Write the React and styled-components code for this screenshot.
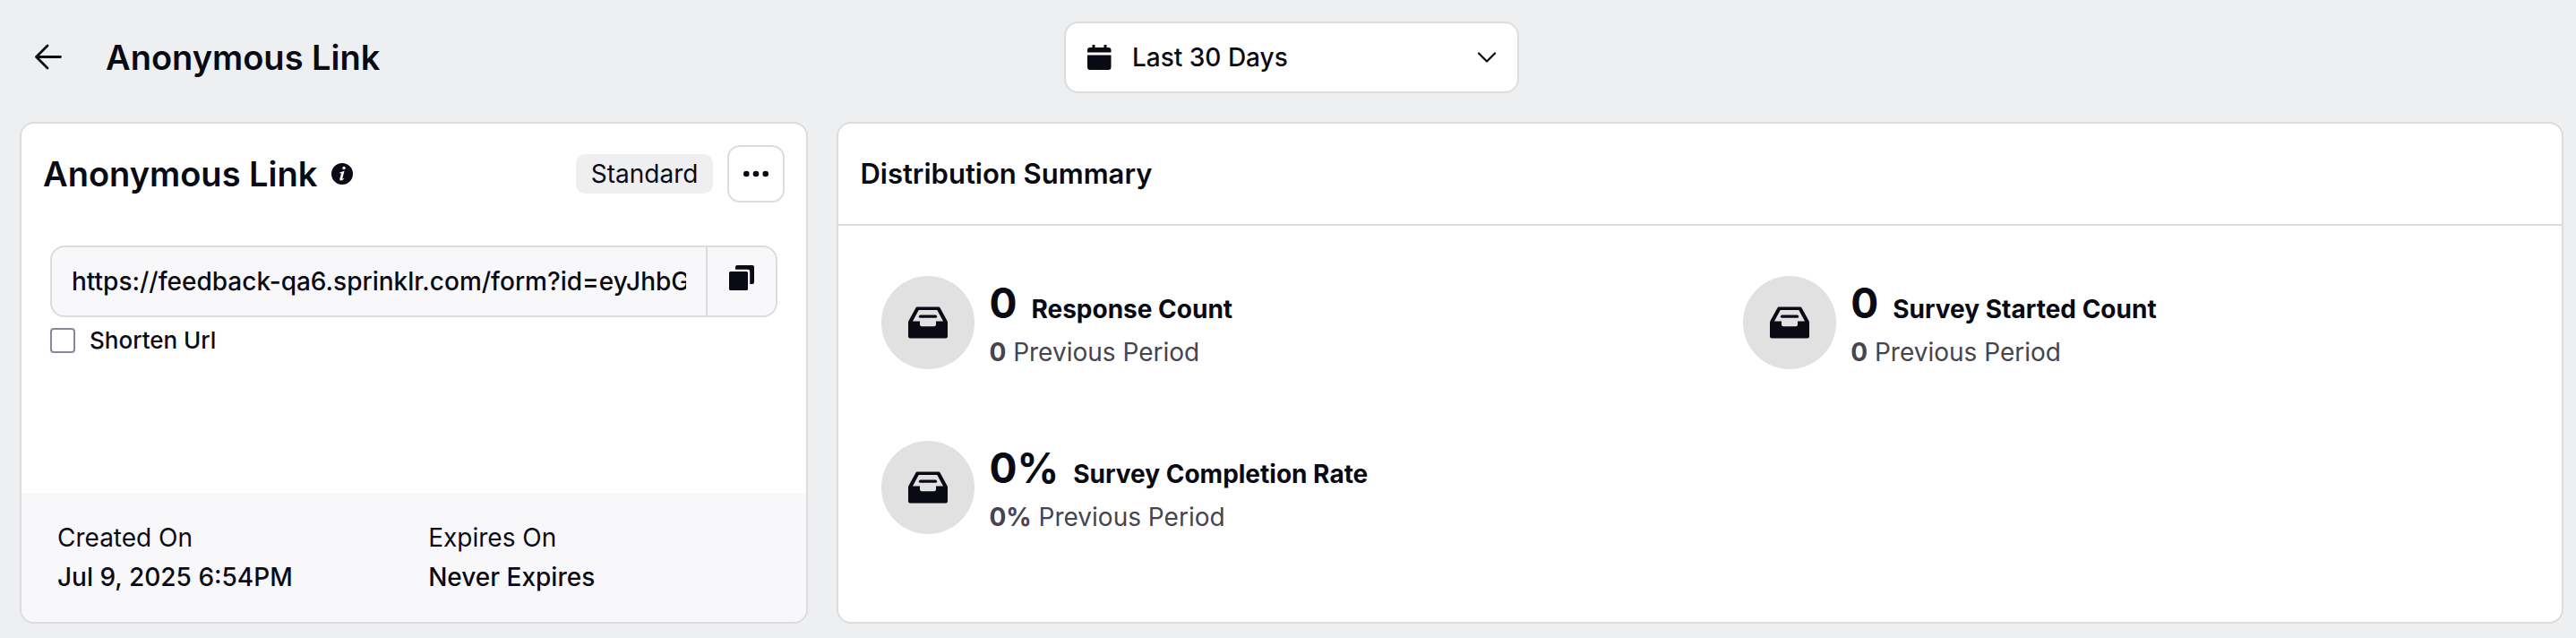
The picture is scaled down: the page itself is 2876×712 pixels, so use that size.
import React, { useState } from 'react';
import styled, { createGlobalStyle } from 'styled-components';

const GlobalStyle = createGlobalStyle`
  * {
    box-sizing: border-box;
  }

  body {
    margin: 0;
    background: #eeeff1;
    color: #0a0a14;
    font-family: Inter, 'Liberation Sans', sans-serif;
    font-size: 28px;
    line-height: 40px;
  }

  button,
  input {
    font: inherit;
    color: inherit;
  }

  h1,
  h2,
  p,
  dl,
  dd {
    margin: 0;
  }
`;

const Page = styled.div`
  display: flex;
  flex-direction: column;
  min-height: 100vh;
  padding: 24px 14px 16px 22px;
`;

const TopBar = styled.header`
  display: grid;
  grid-template-columns: 1fr 508px 1fr;
  align-items: center;
  margin-bottom: 32px;
`;

const TopBarLeft = styled.div`
  display: flex;
  align-items: center;
  gap: 32px;
`;

const BackButton = styled.button`
  display: flex;
  align-items: center;
  justify-content: center;
  width: 64px;
  height: 64px;
  padding: 0;
  border: none;
  background: none;
  cursor: pointer;
`;

const Title = styled.h1`
  font-size: 38px;
  font-weight: 600;
  line-height: 48px;
`;

const CardTitle = styled(Title).attrs({ as: 'h2' })``;

const RangeButton = styled.button`
  display: flex;
  align-items: center;
  height: 80px;
  padding: 0 22px 0 24px;
  border: 2px solid #dcdcdd;
  border-radius: 16px;
  background: #fff;
  font-weight: 500;
  text-align: left;
  cursor: pointer;
`;

const RangeLabel = styled.span`
  flex: 1;
  margin-left: 22px;
`;

const Cards = styled.main`
  display: grid;
  flex: 1;
  grid-template-columns: 31% 1fr;
  gap: 32px;
`;

const Card = styled.section`
  display: flex;
  flex-direction: column;
  min-width: 0;
  overflow: hidden;
  border: 2px solid #dcdcdd;
  border-radius: 16px;
  background: #fff;
`;

const LinkHeader = styled.div`
  display: flex;
  align-items: center;
  padding: 24px 24px 0;
`;

const InfoIcon = styled.svg`
  margin-left: 16px;
`;

const Badge = styled.span`
  margin-left: auto;
  padding: 2px 17px;
  border-radius: 10px;
  background: #eeeff1;
`;

const MoreButton = styled.button`
  display: flex;
  align-items: center;
  justify-content: center;
  width: 64px;
  height: 64px;
  margin-left: 16px;
  padding: 0;
  border: 2px solid #dcdcdd;
  border-radius: 14px;
  background: #fff;
  cursor: pointer;
`;

const LinkBody = styled.div`
  flex: 1;
  padding: 48px 32px 24px;
`;

const UrlField = styled.div`
  display: flex;
  height: 80px;
  overflow: hidden;
  border: 2px solid #dcdcdd;
  border-radius: 16px;
  background: #f8f8fb;
`;

const UrlInput = styled.input`
  flex: 1;
  min-width: 0;
  padding: 0 22px;
  border: none;
  background: none;
  font-weight: 500;
  outline: none;
`;

const CopyButton = styled.button`
  display: flex;
  justify-content: center;
  width: 78px;
  padding: 20px 0 0;
  border: none;
  border-left: 2px solid #dcdcdd;
  background: none;
  cursor: pointer;
`;

const CheckLabel = styled.label`
  display: inline-flex;
  align-items: center;
  gap: 16px;
  margin-top: 6px;
  font-size: 26px;
  font-weight: 500;
`;

const Checkbox = styled.input`
  appearance: none;
  width: 28px;
  height: 28px;
  margin: 0;
  border: 2px solid #8a879b;
  border-radius: 4px;
  background: #fff;

  &:checked {
    background: #8a879b;
  }
`;

const LinkFooter = styled.dl`
  display: grid;
  grid-template-columns: 1fr 1fr;
  padding: 28px 8px 28px 40px;
  background: #f8f8fb;
  line-height: 44px;
`;

const FooterValue = styled.dd`
  font-weight: 500;
`;

const SummaryTitle = styled.h2`
  padding: 36px 24px;
  border-bottom: 2px solid #dcdcdd;
  font-size: 31px;
  font-weight: 600;
`;

const Stats = styled.div`
  display: grid;
  grid-template-columns: 1fr 1fr;
  grid-auto-rows: 184px;
  padding: 16px 0;
`;

const Stat = styled.div`
  display: flex;
  align-items: flex-start;
  gap: 16px;
  padding: 40px 48px 0;
`;

const StatIcon = styled.div`
  display: flex;
  flex: none;
  align-items: center;
  justify-content: center;
  width: 104px;
  height: 104px;
  border-radius: 50%;
  background: #e1e1e1;
`;

const StatText = styled.div`
  padding-top: 2px;
`;

const StatHeading = styled.p`
  display: flex;
  align-items: baseline;
  gap: 16px;
  font-weight: 700;
  line-height: 56px;
`;

const StatValue = styled.span`
  font-size: 46px;
`;

const StatPrevious = styled.p`
  color: #454450;
`;

const BackArrow = () => (
  <svg width="32" height="32" viewBox="0 0 32 32" fill="none" stroke="currentColor" strokeWidth="2.8" strokeLinecap="round" strokeLinejoin="round" aria-hidden="true">
    <path d="M29.500 15.500H2.500M15 3L2.500 15.500L15 28" />
  </svg>
);

const CalendarIcon = () => (
  <svg width="28" height="28" viewBox="0 0 28 28" fill="currentColor" aria-hidden="true">
    <path d="M5.500 0h3v3h10V0h3v3h2a3 3 0 0 1 3 3v2.400H0V6a3 3 0 0 1 3-3h2.500z" />
    <path d="M0 11.600h26.500V25a3 3 0 0 1-3 3H3a3 3 0 0 1-3-3z" />
  </svg>
);

const ChevronIcon = () => (
  <svg width="24" height="24" viewBox="0 0 24 24" fill="none" stroke="currentColor" strokeWidth="2.200" strokeLinecap="round" strokeLinejoin="round" aria-hidden="true">
    <path d="M3 7.500L12 16.500L21 7.500" />
  </svg>
);

const DotsIcon = () => (
  <svg width="28" height="8" viewBox="0 0 28 8" fill="currentColor" aria-hidden="true">
    <circle cx="3.300" cy="4" r="3.300" />
    <circle cx="14" cy="4" r="3.300" />
    <circle cx="24.700" cy="4" r="3.300" />
  </svg>
);

const CopyIcon = () => (
  <svg width="28" height="28" viewBox="0 0 28 28" fill="currentColor" aria-hidden="true">
    <path d="M9 0H26a2 2 0 0 1 2 2V19a2 2 0 0 1-2 2H23.200V7.200a2.400 2.400 0 0 0-2.400-2.400H7V2a2 2 0 0 1 2-2z" />
    <rect y="7" width="21" height="21" rx="1.500" />
  </svg>
);

const InboxIcon = () => (
  <svg width="44" height="36" viewBox="0 0 44 36" aria-hidden="true">
    <path
      fill="currentColor"
      fillRule="evenodd"
      d="M10.500 0.500H33.500C34.600 0.500 35.300 1 35.800 1.900L43.200 15.500C43.700 16.300 44 17 44 18V33.500A2 2 0 0 1 42 35.500H2A2 2 0 0 1 0 33.500V18C0 17 0.300 16.300 0.800 15.500L8.200 1.900C8.700 1 9.400 0.500 10.500 0.500ZM11.700 4L5 16.400H13V20.200A2 2 0 0 0 15 22.200H29A2 2 0 0 0 31 20.200V16.400H39L32.300 4Z"
    />
    <path stroke="currentColor" strokeWidth="3.200" strokeLinecap="round" d="M13.500 11.200H30.500" />
  </svg>
);

const stats = [
  { value: '0', label: 'Response Count', previous: '0' },
  { value: '0', label: 'Survey Started Count', previous: '0' },
  { value: '0%', label: 'Survey Completion Rate', previous: '0%' },
];

const App = () => {
  const [shorten, setShorten] = useState(false);

  return (
    <>
      <GlobalStyle />
      <Page>
        <TopBar>
          <TopBarLeft>
            <BackButton type="button" aria-label="Back">
              <BackArrow />
            </BackButton>
            <Title>Anonymous Link</Title>
          </TopBarLeft>
          <RangeButton type="button" aria-haspopup="listbox">
            <CalendarIcon />
            <RangeLabel>Last 30 Days</RangeLabel>
            <ChevronIcon />
          </RangeButton>
        </TopBar>
        <Cards>
          <Card>
            <LinkHeader>
              <CardTitle>Anonymous Link</CardTitle>
              <InfoIcon width="24" height="24" viewBox="0 0 24 24" role="img" aria-label="Info">
                <circle cx="12" cy="12" r="12" fill="currentColor" />
                <circle cx="14" cy="5.500" r="1.700" fill="#fff" />
                <path d="M9.300 10.600L14.500 8.800L12.300 17.200C12.200 17.900 12.800 17.700 14.600 16.600C13.400 18.700 11.800 19.700 10.300 19.500C9.200 19.300 9.100 18.400 9.400 17.300L11.100 11.300L9.200 11.400Z" fill="#fff" />
              </InfoIcon>
              <Badge>Standard</Badge>
              <MoreButton type="button" aria-label="More actions">
                <DotsIcon />
              </MoreButton>
            </LinkHeader>
            <LinkBody>
              <UrlField>
                <UrlInput type="text" aria-label="Survey link" readOnly value="https://feedback-qa6.sprinklr.com/form?id=eyJhbGciOiJIUzI1NiJ9" />
                <CopyButton type="button" aria-label="Copy link">
                  <CopyIcon />
                </CopyButton>
              </UrlField>
              <CheckLabel>
                <Checkbox type="checkbox" checked={shorten} onChange={(e) => setShorten(e.target.checked)} />
                Shorten Url
              </CheckLabel>
            </LinkBody>
            <LinkFooter>
              <div>
                <dt>Created On</dt>
                <FooterValue>Jul 9, 2025 6:54PM</FooterValue>
              </div>
              <div>
                <dt>Expires On</dt>
                <FooterValue>Never Expires</FooterValue>
              </div>
            </LinkFooter>
          </Card>
          <Card>
            <SummaryTitle>Distribution Summary</SummaryTitle>
            <Stats>
              {stats.map(({ value, label, previous }) => (
                <Stat key={label}>
                  <StatIcon>
                    <InboxIcon />
                  </StatIcon>
                  <StatText>
                    <StatHeading>
                      <StatValue>{value}</StatValue>
                      {label}
                    </StatHeading>
                    <StatPrevious>
                      <b>{previous}</b>
                      {' '}
                      Previous Period
                    </StatPrevious>
                  </StatText>
                </Stat>
              ))}
            </Stats>
          </Card>
        </Cards>
      </Page>
    </>
  );
};

export default App;
